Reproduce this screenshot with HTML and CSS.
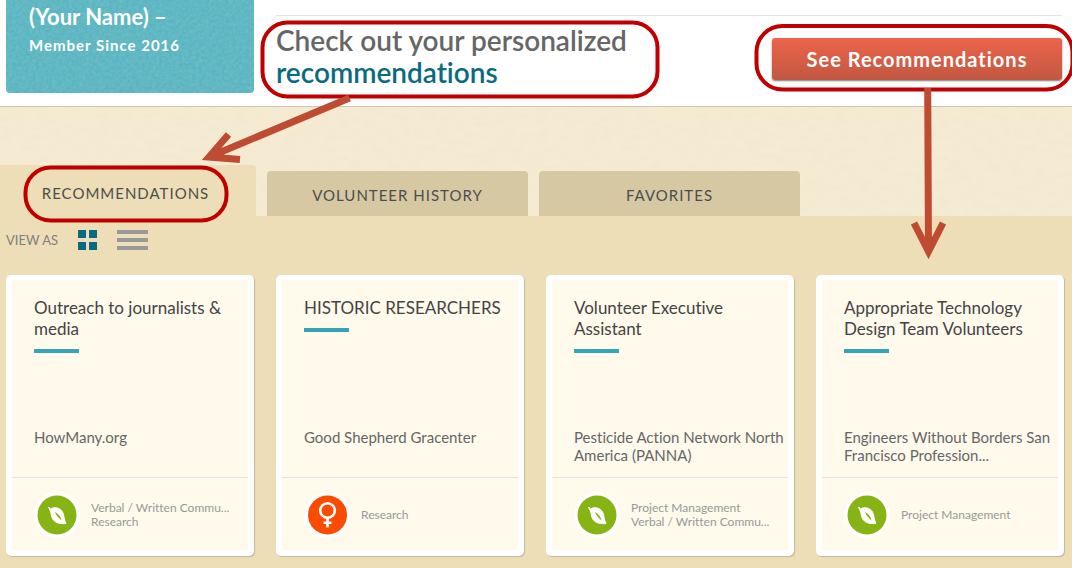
FILE: index.html
```
<!DOCTYPE html>
<html lang="en">
<head>
    <meta charset="UTF-8">
    <meta name="viewport" content="width=device-width, initial-scale=1.0">
    <title>Volunteer Recommendations</title>
    <link rel="stylesheet" href="styles.css">
</head>
<body>
<svg class="sprite" aria-hidden="true">
    <symbol id="icon-leaf" viewBox="0 0 46 46">
        <circle cx="23" cy="23" r="23" fill="#fff"/>
        <circle cx="23" cy="23" r="19.5" fill="#86b414"/>
        <path d="M14.500 15L16.500 17C20 14.500 26 15.500 28.500 20C30.500 23.500 29.500 27 32 31.500C27.500 32 22 31.500 19 27.500C17 24.500 17.500 21 16 18.500Z" fill="#fff" stroke="#fff" stroke-width="1" stroke-linejoin="round"/>
        <path d="M21 20C24 21.500 27 25 27.500 28.500C25 26.500 22 23.500 21 20Z" fill="#86b414"/>
    </symbol>
    <symbol id="icon-women" viewBox="0 0 46 46">
        <circle cx="23" cy="23" r="23" fill="#fff"/>
        <circle cx="23.500" cy="23" r="19.500" fill="#fa4b00"/>
        <g fill="none" stroke="#fff" stroke-width="2.600">
            <circle cx="23.500" cy="18.500" r="7.300"/>
            <path d="M23.500 25.500V35.500M19.500 30.700H27.500"/>
        </g>
    </symbol>
</svg>

<div class="page">
    <header>
        <div class="profile">
            <h2>(Your Name) –</h2>
            <p>Member Since 2016</p>
        </div>
        <div class="promo">
            <h1>Check out your personalized <a href="#recommendations">recommendations</a></h1>
            <button type="button" class="see-button">See Recommendations</button>
        </div>
    </header>

    <nav>
        <a class="tab active" href="#recommendations">RECOMMENDATIONS</a>
        <a class="tab" href="#history">VOLUNTEER HISTORY</a>
        <a class="tab" href="#favorites">FAVORITES</a>
    </nav>

    <main id="recommendations">
        <div class="view-as">
            <span>VIEW AS</span>
            <button type="button" aria-label="Grid view">
                <svg width="19" height="20" fill="#0a6a80">
                    <rect width="8" height="8"/><rect x="11" width="8" height="8"/>
                    <rect y="12" width="8" height="8"/><rect x="11" y="12" width="8" height="8"/>
                </svg>
            </button>
            <button type="button" aria-label="List view">
                <svg width="31" height="20" fill="#999">
                    <rect width="31" height="4"/><rect y="8" width="31" height="4"/><rect y="16" width="31" height="4"/>
                </svg>
            </button>
        </div>

        <div class="cards">
            <article class="card">
                <div class="card-body">
                    <h3>Outreach to journalists &amp; media</h3>
                    <p class="org">HowMany.org</p>
                </div>
                <div class="card-footer">
                    <svg class="cause"><use href="#icon-leaf"/></svg>
                    <p>Verbal / Written Commu...<br>Research</p>
                </div>
            </article>
            <article class="card">
                <div class="card-body">
                    <h3>HISTORIC RESEARCHERS</h3>
                    <p class="org">Good Shepherd Gracenter</p>
                </div>
                <div class="card-footer">
                    <svg class="cause"><use href="#icon-women"/></svg>
                    <p>Research</p>
                </div>
            </article>
            <article class="card">
                <div class="card-body">
                    <h3>Volunteer Executive Assistant</h3>
                    <p class="org">Pesticide Action Network North America (PANNA)</p>
                </div>
                <div class="card-footer">
                    <svg class="cause"><use href="#icon-leaf"/></svg>
                    <p>Project Management<br>Verbal / Written Commu...</p>
                </div>
            </article>
            <article class="card">
                <div class="card-body">
                    <h3>Appropriate Technology Design Team Volunteers</h3>
                    <p class="org">Engineers Without Borders San Francisco Profession...</p>
                </div>
                <div class="card-footer">
                    <svg class="cause"><use href="#icon-leaf"/></svg>
                    <p>Project Management</p>
                </div>
            </article>
        </div>
    </main>

    <!-- Callouts drawn over the page -->
    <svg class="callouts" aria-hidden="true">
        <g fill="none" stroke="#c00000" stroke-width="4">
            <rect x="262.500" y="22.500" width="395" height="74" rx="25"/>
            <rect x="756.500" y="26" width="316" height="63.500" rx="26"/>
            <rect x="25.500" y="167.500" width="201" height="53" rx="25"/>
        </g>
        <g fill="none" stroke="#be4b32" stroke-width="7">
            <path d="M349.500 98L209 157M228.500 134.500L209 157L240 159.500"/>
            <path d="M927.700 88L928.500 251.500M914 223L928.500 251.500L943 223"/>
        </g>
    </svg>
</div>
</body>
</html>
```

FILE: styles.css
```
* {
    box-sizing: border-box;
}
body {
    margin: 0;
    font-family: Lato, sans-serif;
    font-variant-ligatures: none;
    color: #666;
    background-color: #eddeb7;
}
h1, h2, h3, p {
    margin: 0;
}
button {
    font-family: inherit;
    border: none;
    cursor: pointer;
}
.sprite {
    display: none;
}
.page {
    position: relative;
    overflow: hidden;
}

/* Header */
header {
    display: flex;
    gap: 22px;
    height: 107px;
    padding: 0 10px 0 6px;
    background: white;
    border-bottom: 1px solid #cfc6b4;
}
.profile {
    flex: 0 0 248px;
    height: 93px;
    padding: 4px 23px;
    color: white;
    background-color: #58b4c0;
    background-image: url("data:image/svg+xml,%3Csvg xmlns='http://www.w3.org/2000/svg' width='248' height='120'%3E%3Cfilter id='n'%3E%3CfeTurbulence type='fractalNoise' baseFrequency='.3' numOctaves='3'/%3E%3CfeColorMatrix values='0 0 0 0 1 0 0 0 0 1 0 0 0 0 1 .2 0 0 0 -.05'/%3E%3C/filter%3E%3Crect width='248' height='120' filter='url(%23n)'/%3E%3C/svg%3E");
    border-radius: 0 0 4px 4px;
}
.profile h2 {
    font-size: 22px;
    line-height: 26px;
}
.profile p {
    margin-top: 5px;
    font-size: 15px;
    line-height: 20px;
    font-weight: bold;
    letter-spacing: 1px;
}
.promo {
    flex: 1;
    display: flex;
    justify-content: space-between;
    align-items: flex-start;
    margin-top: 15px;
    padding-top: 8px;
    border-top: 1px solid #e5e5e5;
}
.promo h1 {
    max-width: 390px;
    font-size: 28px;
    line-height: 32px;
    font-weight: 600;
}
.promo a {
    color: #0a6a80;
    text-decoration: none;
}
.see-button {
    width: 290px;
    height: 42px;
    margin-top: 14px;
    padding: 0;
    color: white;
    font-size: 20px;
    font-weight: bold;
    letter-spacing: 1px;
    background: linear-gradient(#ec644b, #c25741);
    border-radius: 3px;
    box-shadow: 0 1px 2px #777;
}

/* Tabs */
nav {
    display: flex;
    align-items: flex-end;
    gap: 11px;
    height: 109px;
    background-color: #f5ebd3;
    background-image: url("data:image/svg+xml,%3Csvg xmlns='http://www.w3.org/2000/svg' width='300' height='120'%3E%3Cfilter id='n'%3E%3CfeTurbulence type='fractalNoise' baseFrequency='.08 .15' numOctaves='3' stitchTiles='stitch'/%3E%3CfeColorMatrix values='0 0 0 0 .87 0 0 0 0 .78 0 0 0 0 .58 .7 0 0 0 -.22'/%3E%3C/filter%3E%3Crect width='300' height='120' filter='url(%23n)'/%3E%3C/svg%3E");
}
.tab {
    flex: 0 1 261px;
    height: 45px;
    line-height: 48px;
    font-size: 15px;
    letter-spacing: 1px;
    text-align: center;
    text-decoration: none;
    color: #4d4d4d;
    background: #d6c8a3;
    border-radius: 4px 4px 0 0;
}
.tab.active {
    flex-basis: 256px;
    height: 51px;
    padding-right: 5px;
    line-height: 56px;
    background: #eddeb7;
    border-radius: 0 4px 0 0;
}

/* Recommendation list */
main {
    padding: 12px 8px 12px 6px;
}
.view-as {
    display: flex;
    align-items: center;
    gap: 20px;
    height: 24px;
    font-size: 13px;
    color: #808080;
}
.view-as button {
    display: flex;
    padding: 0;
    background: none;
}
.cards {
    display: grid;
    grid-template-columns: repeat(4, 1fr);
    gap: 22px;
    margin-top: 23px;
}
.card {
    border: solid white;
    border-width: 5px 6px 6px;
    border-radius: 5px;
    background: #fffaec;
    box-shadow: 1px 1px 1px #c4b896;
}
.card-body {
    display: flex;
    flex-direction: column;
    height: 198px;
    padding: 17px 0 13px 22px;
    border-bottom: 1px solid #e3e3e3;
}
.card h3 {
    padding-right: 10px;
    font-size: 17px;
    line-height: 21px;
    font-weight: normal;
    color: #444;
}
.card h3::after {
    content: "";
    display: block;
    width: 45px;
    height: 4px;
    margin-top: 10px;
    background: #34a5b8;
}
.org {
    min-height: 36px;
    margin-top: auto;
    font-size: 15px;
    line-height: 18px;
}
.card-footer {
    display: flex;
    align-items: center;
    gap: 11px;
    height: 72px;
    padding: 2px 0 0 22px;
    font-size: 12px;
    line-height: 14px;
    color: #999;
}
.cause {
    width: 46px;
    height: 46px;
}

.callouts {
    position: absolute;
    top: 0;
    left: 0;
    width: 100%;
    height: 100%;
    pointer-events: none;
}
```
